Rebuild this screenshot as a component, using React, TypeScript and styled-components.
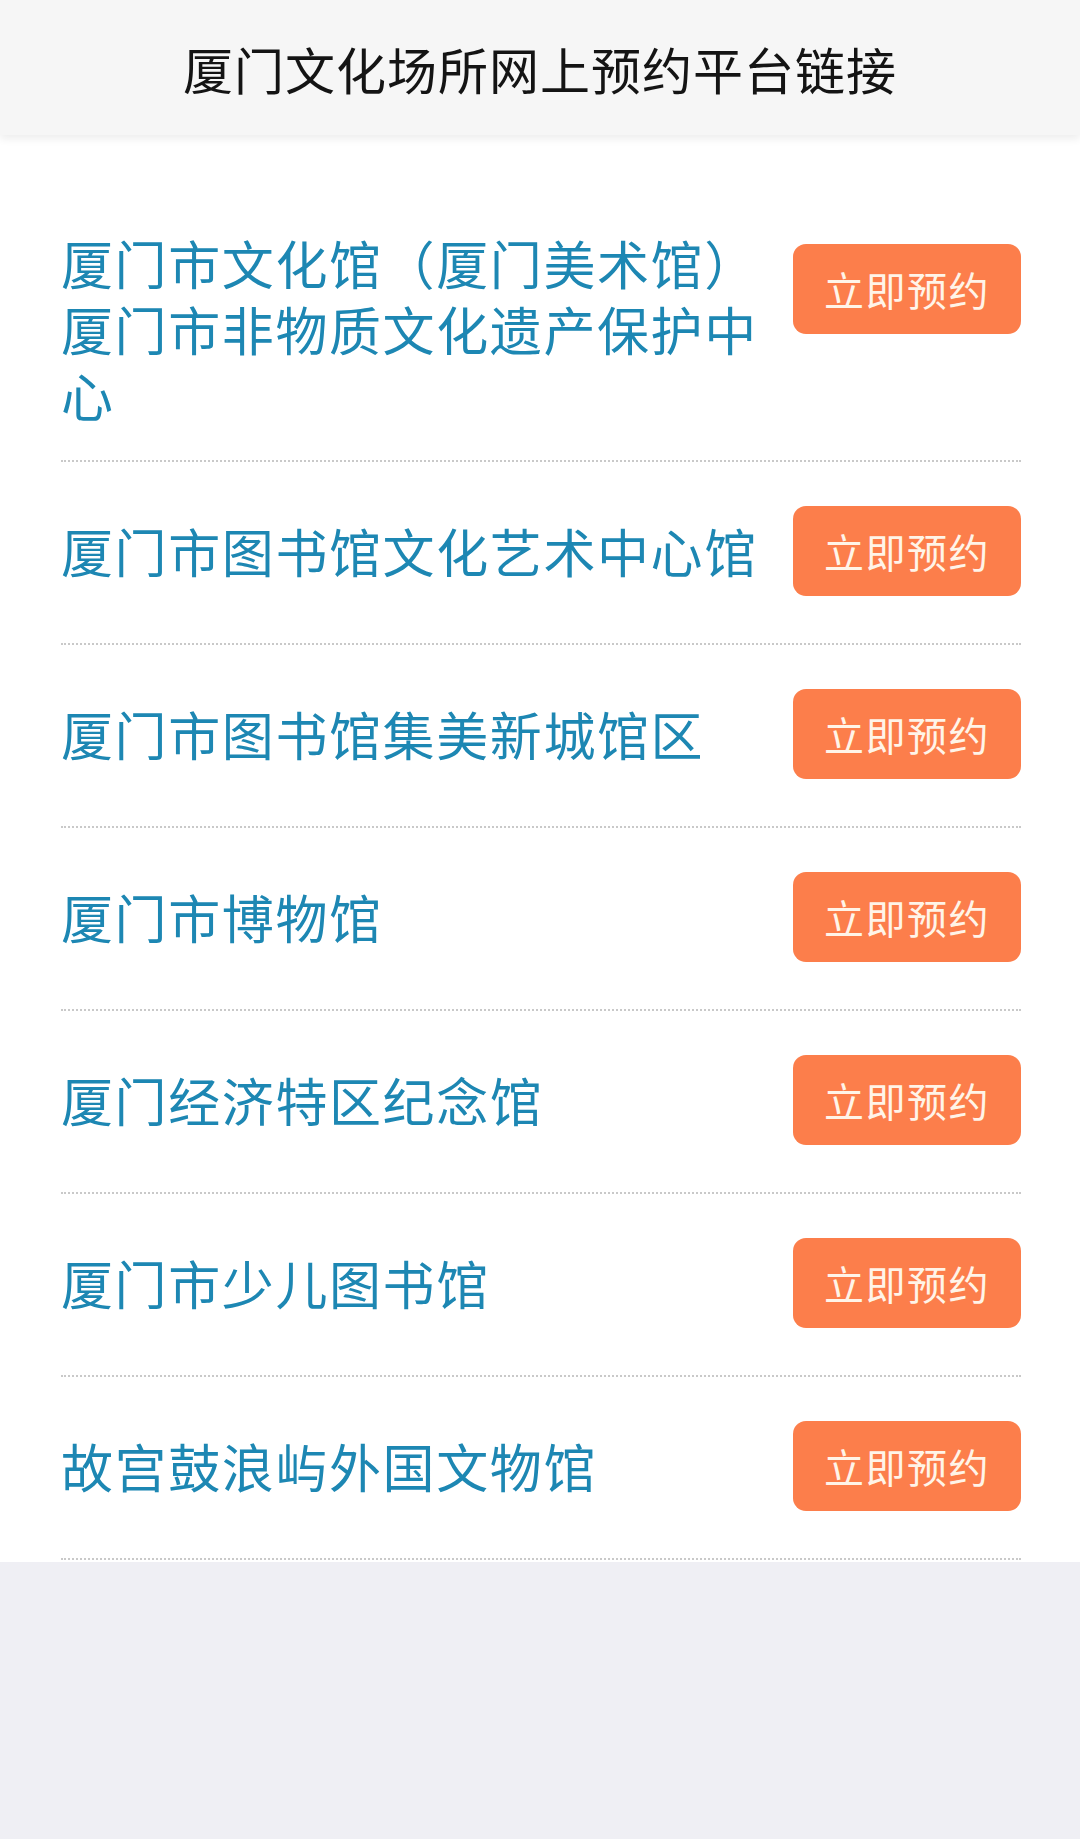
import styled, { createGlobalStyle } from "styled-components";

interface Venue {
  name: string;
  multi?: boolean;
}

const venues: Venue[] = [
  { name: "厦门市文化馆（厦门美术馆）厦门市非物质文化遗产保护中心", multi: true },
  { name: "厦门市图书馆文化艺术中心馆" },
  { name: "厦门市图书馆集美新城馆区" },
  { name: "厦门市博物馆" },
  { name: "厦门经济特区纪念馆" },
  { name: "厦门市少儿图书馆" },
  { name: "故宫鼓浪屿外国文物馆" },
];

const GlobalStyle = createGlobalStyle`
  html, body {
    margin: 0;
    padding: 0;
    background: #efeff4;
    font-family: "Noto Sans CJK SC", "Noto Sans", sans-serif;
  }
  * { box-sizing: border-box; }
`;

const App = () => {
  return (
    <>
      <GlobalStyle />
      <StyledPage>
        <Header>
          <Title>厦门文化场所网上预约平台链接</Title>
        </Header>
        <List>
          {venues.map((v) => (
            <Row key={v.name} $multi={v.multi}>
              <Name>{v.name}</Name>
              <BookButton $multi={v.multi}>立即预约</BookButton>
            </Row>
          ))}
        </List>
      </StyledPage>
    </>
  );
};

const StyledPage = styled.div`
  width: 1080px;
  min-height: 1839px;
  background: #efeff4;
`;

const Header = styled.header`
  height: 135px;
  background: #f6f6f6;
  display: flex;
  align-items: center;
  justify-content: center;
  box-shadow: 0 4px 8px rgba(0, 0, 0, 0.07);
  position: relative;
  z-index: 1;
`;

const Title = styled.h1`
  margin: 0;
  font-size: 50px;
  font-weight: 400;
  letter-spacing: 1px;
  color: #141414;
  line-height: 1;
`;

const List = styled.ul`
  list-style: none;
  margin: 0;
  padding: 93px 59px 2px 61px;
  background: #fff;
`;

const Row = styled.li<{ $multi?: boolean }>`
  display: flex;
  justify-content: space-between;
  align-items: ${(p) => (p.$multi ? "flex-start" : "center")};
  padding: ${(p) => (p.$multi ? "0 0 30px" : "44px 0 47px")};
  border-bottom: 2px dotted #c9c9c9;
`;

const Name = styled.span`
  flex: 1;
  max-width: 730px;
  font-size: 52px;
  letter-spacing: 1.6px;
  line-height: 66px;
  color: #1d87b3;
  padding: 2px 0;
`;

const BookButton = styled.button<{ $multi?: boolean }>`
  flex: 0 0 auto;
  width: 228px;
  height: 90px;
  margin-top: ${(p) => (p.$multi ? "16px" : "0")};
  border: none;
  border-radius: 13px;
  background: #fc7e4b;
  color: #fff4e8;
  font-family: "Noto Sans CJK SC", "Noto Sans", sans-serif;
  font-size: 40px;
  letter-spacing: 1.5px;
  padding: 0;
  cursor: pointer;
`;

export default App;
